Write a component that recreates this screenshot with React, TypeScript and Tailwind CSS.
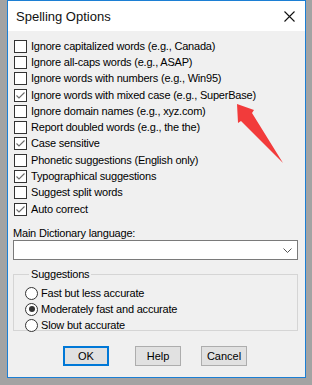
import React from 'react';

const options: { label: string; checked: boolean }[] = [
  { label: 'Ignore capitalized words (e.g., Canada)', checked: false },
  { label: 'Ignore all-caps words (e.g., ASAP)', checked: false },
  { label: 'Ignore words with numbers (e.g., Win95)', checked: false },
  { label: 'Ignore words with mixed case (e.g., SuperBase)', checked: true },
  { label: 'Ignore domain names (e.g., xyz.com)', checked: false },
  { label: 'Report doubled words (e.g., the the)', checked: false },
  { label: 'Case sensitive', checked: true },
  { label: 'Phonetic suggestions (English only)', checked: false },
  { label: 'Typographical suggestions', checked: true },
  { label: 'Suggest split words', checked: false },
  { label: 'Auto correct', checked: true },
];

const speeds = ['Fast but less accurate', 'Moderately fast and accurate', 'Slow but accurate'];

const CheckBox: React.FC<{ checked: boolean }> = ({ checked }) => (
  <span className="w-[13px] h-[13px] border border-[#333] bg-white flex items-center justify-center shrink-0">
    {checked && (
      <svg width="11" height="11" viewBox="0 0 11 11">
        <path d="M1.5 5.5 L4 8 L9.5 2.5" fill="none" stroke="#6a6a6a" strokeWidth="1.1" />
      </svg>
    )}
  </span>
);

const Radio: React.FC<{ checked: boolean }> = ({ checked }) => (
  <span className="w-[13px] h-[13px] rounded-full border border-[#333] bg-white flex items-center justify-center shrink-0">
    {checked && <span className="w-[6px] h-[6px] rounded-full bg-[#333]" />}
  </span>
);

export default function App() {
  return (
    <div className="w-[312px] h-[385px] bg-[#a3a3a3] relative overflow-hidden text-[11px] tracking-[-0.2px] text-black font-['Liberation_Sans',Arial,sans-serif]">
      <div className="ml-[7px] w-[299px] h-[378px] border border-[#1c7fd4] bg-[#f0f0f0] flex flex-col">
        <div className="h-[30px] bg-white flex items-center justify-between pl-[8px] pr-[10px] shrink-0">
          <span className="text-[13px] tracking-normal text-[#111] mt-[1px]">Spelling Options</span>
          <svg width="11" height="11" viewBox="0 0 11 11" className="mt-[1px]">
            <path d="M0.5 0.5 L10.5 10.5 M10.5 0.5 L0.5 10.5" stroke="#111" strokeWidth="1.1" />
          </svg>
        </div>

        <div className="flex flex-col pl-[6px] pt-[7px]">
          {options.map((o) => (
            <div key={o.label} className="h-[16.3px] flex items-center gap-[4px]">
              <CheckBox checked={o.checked} />
              <span className="leading-none whitespace-nowrap">{o.label}</span>
            </div>
          ))}
        </div>

        <div className="ml-[5px] mt-[9px] h-[14px] leading-[14px]">Main Dictionary language:</div>
        <div className="ml-[5px] w-[285px] h-[20px] border border-[#7a7a7a] bg-white flex items-center justify-end pr-[5px]">
          <svg width="9" height="5" viewBox="0 0 9 5">
            <path d="M0.5 0.5 L4.5 4.5 L8.5 0.5" fill="none" stroke="#555" strokeWidth="1" />
          </svg>
        </div>

        <fieldset className="ml-[5px] mt-[8px] w-[285px] h-[63px] border border-[#d5d5d5] pl-[11px] pt-[5px]">
          <legend className="ml-[4px] px-[2px] leading-[12px]">Suggestions</legend>
          {speeds.map((s, i) => (
            <div key={s} className="h-[16px] flex items-center gap-[3px]">
              <Radio checked={i === 1} />
              <span className="leading-none whitespace-nowrap">{s}</span>
            </div>
          ))}
        </fieldset>

        <div className="flex ml-[55px] mt-[15px] tracking-normal">
          <button className="w-[46px] h-[20px] bg-[#e1e1e1] border-2 border-[#0078d7] leading-none">OK</button>
          <button className="ml-[26px] w-[46px] h-[20px] bg-[#e1e1e1] border border-[#adadad] leading-none">Help</button>
          <button className="ml-[20px] w-[46px] h-[20px] bg-[#e1e1e1] border border-[#adadad] leading-none">Cancel</button>
        </div>
      </div>

      <svg className="absolute left-0 top-0 pointer-events-none" width="312" height="385" viewBox="0 0 312 385">
        <polygon points="237,104 254,110 252,113 283,163 241,121 238,123" fill="#f23b3b" />
      </svg>
    </div>
  );
}
